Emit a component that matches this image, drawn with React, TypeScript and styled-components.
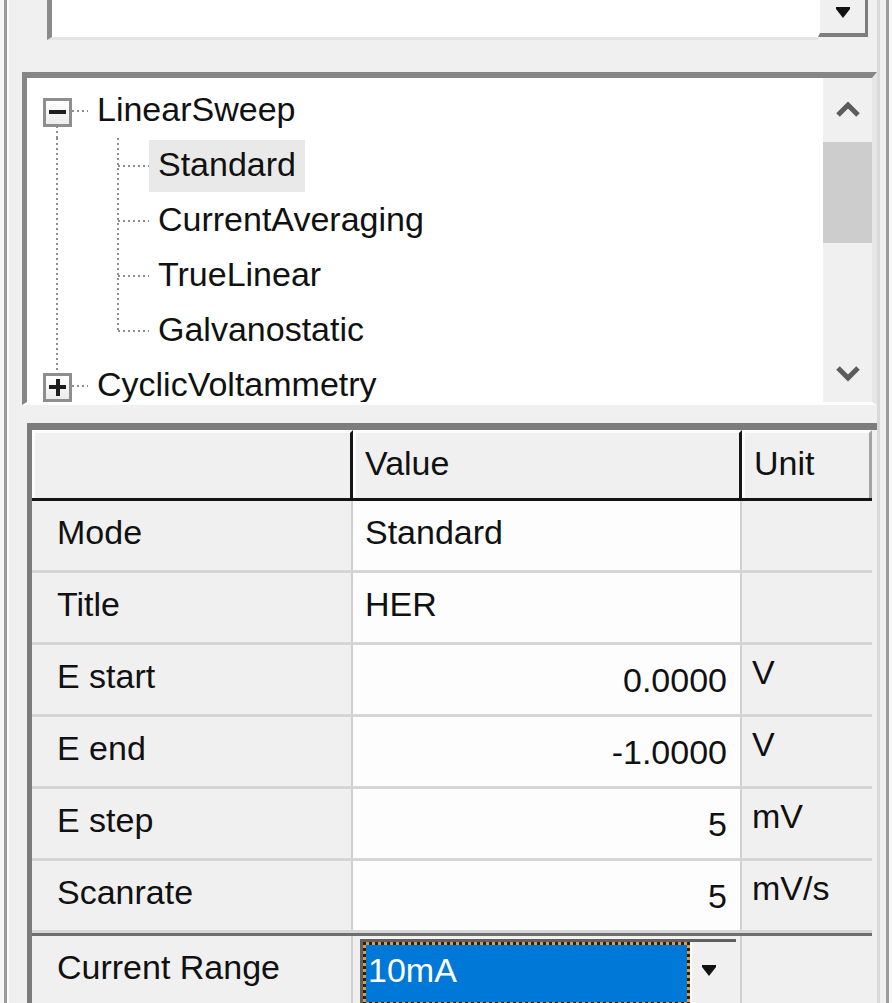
import React from 'react';
import styled, { createGlobalStyle, css } from 'styled-components';

const GlobalStyle = createGlobalStyle`
  html, body { margin: 0; padding: 0; background: #f7f7f7; }
  * { box-sizing: border-box; }
`;

const Page = styled.div`
  width: 892px;
  height: 1003px;
  overflow: hidden;
  background: #f7f7f7;
  padding-left: 4px;
  font-family: "Liberation Sans", Arial, sans-serif;
  font-size: 34px;
  color: #111;
`;

const Frame = styled.div`
  width: 885px;
  height: 1003px;
  border-left: 3px solid #9b9b9b;
  border-right: 3px solid #9b9b9b;
  background: #f0f0f0;
`;

const Inner = styled.div`
  width: 873px;
  height: 100%;
  border-left: 2px solid #fbfbfb;
  border-right: 3px solid #d9d9d9;
  display: flex;
  flex-direction: column;
`;

/* ---------- top combo ---------- */
const ComboRow = styled.div`
  display: flex;
  align-items: flex-start;
  margin: -13px 0 0 38px;
  width: 821px;
  height: 53px;
  flex: none;
`;

const ComboField = styled.div`
  flex: 1;
  height: 53px;
  background: #fff;
  border-left: 5px solid #8a8a8a;
  border-bottom: 3px solid #e4e4e4;
`;

const ComboButton = styled.div`
  width: 50px;
  height: 50px;
  flex: none;
  display: flex;
  align-items: center;
  justify-content: center;
  padding-top: 6px;
  background: #f0f0f0;
  border-left: 2px solid #fdfdfd;
  border-right: 3px solid #7d7d7d;
  border-bottom: 4px solid #7d7d7d;
`;

const DropArrow = () => (
  <svg width="16" height="12" viewBox="0 0 16 12">
    <polygon points="1,0 15,0 15,2 8,11 1,2" fill="#111" />
  </svg>
);

/* ---------- tree ---------- */
const TreePanel = styled.div`
  margin: 32px 0 0 13px;
  width: 855px;
  height: 333px;
  flex: none;
  display: flex;
  border-top: 6px solid #868686;
  border-left: 5px solid #868686;
  border-bottom: 3px solid #fdfdfd;
  border-right: 5px solid #e6e6e6;
`;

const TreeView = styled.div`
  flex: 1;
  background: #fff;
  padding-top: 5px;
  display: flex;
  flex-direction: column;
  overflow: hidden;
`;

const TreeRow = styled.div`
  display: flex;
  height: 55px;
  flex: none;
`;

type LineKind = 'full' | 'top' | 'bottom' | 'none';

const dotV = 'repeating-linear-gradient(to bottom, #8e8e8e 0 2px, transparent 2px 5px)';
const dotH = 'repeating-linear-gradient(to right, #8e8e8e 0 2px, transparent 2px 5px)';

const Gutter = styled.div<{ $line: LineKind; $stubFrom?: number }>`
  flex: none;
  width: 61px;
  display: flex;
  align-items: center;
  background-repeat: no-repeat;
  ${({ $line, $stubFrom }) => {
    const imgs: string[] = [];
    const sizes: string[] = [];
    const pos: string[] = [];
    if ($line !== 'none') {
      imgs.push(dotV);
      sizes.push($line === 'full' ? '2px 100%' : '2px 50%');
      pos.push($line === 'bottom' ? '29px 100%' : '29px 0');
    }
    if ($stubFrom !== undefined) {
      imgs.push(dotH);
      sizes.push(`${61 - $stubFrom}px 2px`);
      pos.push(`${$stubFrom}px 50%`);
    }
    if (!imgs.length) return css``;
    return css`
      background-image: ${imgs.join(', ')};
      background-size: ${sizes.join(', ')};
      background-position: ${pos.join(', ')};
    `;
  }}
`;

const ExpandBox = styled.span<{ $open: boolean }>`
  position: relative;
  margin-left: 16px;
  margin-top: 3px;
  width: 29px;
  height: 29px;
  border: 3px solid #8e8e8e;
  background: linear-gradient(#ffffff, #ececec);
  display: flex;
  align-items: center;
  justify-content: center;
  &::before {
    content: '';
    width: 17px;
    height: 4px;
    background: #1e1e1e;
  }
  ${({ $open }) =>
    !$open &&
    css`
      &::after {
        content: '';
        position: absolute;
        width: 4px;
        height: 17px;
        background: #1e1e1e;
      }
    `}
`;

const NodeLabel = styled.span<{ $selected?: boolean }>`
  align-self: center;
  display: flex;
  align-items: center;
  height: 52px;
  padding: 0 9px 3px;
  white-space: nowrap;
  line-height: 1;
  color: #111;
  background: ${({ $selected }) => ($selected ? '#e9e9e9' : 'transparent')};
`;

const Scrollbar = styled.div`
  width: 49px;
  flex: none;
  display: flex;
  flex-direction: column;
  background: #f0f0f0;
`;

const ScrollArrow = styled.div<{ $h: number }>`
  height: ${({ $h }) => $h}px;
  flex: none;
  display: flex;
  align-items: center;
  justify-content: center;
`;

const Thumb = styled.div`
  height: 101px;
  flex: none;
  background: #cdcdcd;
`;

const Track = styled.div`
  flex: 1;
`;

const Chevron = ({ down }: { down?: boolean }) => (
  <svg width="26" height="18" viewBox="0 0 26 18">
    <polyline
      points={down ? '3,4 13,14 23,4' : '3,14 13,4 23,14'}
      fill="none"
      stroke="#5c5c5c"
      strokeWidth="5"
    />
  </svg>
);

/* ---------- table ---------- */
const Table = styled.div`
  margin: 18px 0 0 18px;
  width: 850px;
  flex: 1;
  border-top: 7px solid #7c7c7c;
  border-left: 5px solid #7c7c7c;
`;

const COLS = '321px 389px 130px';

const HeaderRow = styled.div`
  display: grid;
  grid-template-columns: ${COLS};
  height: 71px;
  width: 840px;
  border-bottom: 3px solid #141414;
`;

const HeaderCell = styled.div<{ $edge: 'dark' | 'light' }>`
  display: flex;
  align-items: center;
  padding: 0 0 4px 9px;
  background: #f0f0f0;
  border-top: 3px solid #fcfcfc;
  border-left: 3px solid #fcfcfc;
  border-right: 3px solid ${({ $edge }) => ($edge === 'dark' ? '#161616' : '#a3a3a3')};
`;

const BodyRow = styled.div<{ $active?: boolean }>`
  display: grid;
  grid-template-columns: ${COLS};
  width: 840px;
  height: 72px;
  border-bottom: 3px solid #d6d6d6;
  ${({ $active }) =>
    $active &&
    css`
      border-bottom: none;
      border-top: 3px solid #6e6e6e;
    `}
`;

const NameCell = styled.div`
  display: flex;
  align-items: center;
  padding: 0 0 6px 25px;
  background: #f0f0f0;
  border-right: 2px solid #d0d0d0;
  white-space: nowrap;
`;

const ValueCell = styled.div<{ $align: 'left' | 'right' }>`
  display: flex;
  align-items: center;
  justify-content: ${({ $align }) => ($align === 'right' ? 'flex-end' : 'flex-start')};
  padding: ${({ $align }) => ($align === 'right' ? '2px 13px 0 0' : '0 0 6px 12px')};
  background: #fdfdfd;
  border-right: 2px solid #d0d0d0;
  white-space: nowrap;
`;

const UnitCell = styled.div`
  display: flex;
  align-items: center;
  padding: 0 0 14px 10px;
  background: #f0f0f0;
  white-space: nowrap;
`;

const EditCell = styled.div`
  display: flex;
  padding: 3px 4px 0 7px;
  background: #f0f0f0;
  border-right: 2px solid #d0d0d0;
`;

const EditCombo = styled.div`
  flex: 1;
  display: flex;
  border-top: 3px solid #5f5f5f;
  border-left: 3px solid #5f5f5f;
`;

const SelectedField = styled.div`
  flex: 1;
  display: flex;
  align-items: center;
  padding: 0 0 6px 2px;
  color: #fff;
  border: 3px dotted #2a2010;
  background: linear-gradient(#0078d7, #0078d7) padding-box, #d99a4a border-box;
`;

const EditButton = styled.div`
  width: 46px;
  flex: none;
  display: flex;
  align-items: center;
  justify-content: center;
  padding: 0 10px 6px 0;
  background: #f0f0f0;
  border-left: 2px solid #fdfdfd;
`;

type Param = { name: string; value: string; unit: string; align: 'left' | 'right' };

const params: Param[] = [
  { name: 'Mode', value: 'Standard', unit: '', align: 'left' },
  { name: 'Title', value: 'HER', unit: '', align: 'left' },
  { name: 'E start', value: '0.0000', unit: 'V', align: 'right' },
  { name: 'E end', value: '-1.0000', unit: 'V', align: 'right' },
  { name: 'E step', value: '5', unit: 'mV', align: 'right' },
  { name: 'Scanrate', value: '5', unit: 'mV/s', align: 'right' },
];

const children = ['Standard', 'CurrentAveraging', 'TrueLinear', 'Galvanostatic'];

export default function App() {
  return (
    <Page>
      <GlobalStyle />
      <Frame>
        <Inner>
          <ComboRow>
            <ComboField />
            <ComboButton>
              <DropArrow />
            </ComboButton>
          </ComboRow>

          <TreePanel>
            <TreeView>
              <TreeRow>
                <Gutter $line="bottom" $stubFrom={45}>
                  <ExpandBox $open />
                </Gutter>
                <NodeLabel>LinearSweep</NodeLabel>
              </TreeRow>
              {children.map((c, i) => (
                <TreeRow key={c}>
                  <Gutter $line="full" />
                  <Gutter $line={i === children.length - 1 ? 'top' : 'full'} $stubFrom={30} />
                  <NodeLabel $selected={i === 0}>{c}</NodeLabel>
                </TreeRow>
              ))}
              <TreeRow>
                <Gutter $line="top" $stubFrom={45}>
                  <ExpandBox $open={false} />
                </Gutter>
                <NodeLabel>CyclicVoltammetry</NodeLabel>
              </TreeRow>
            </TreeView>
            <Scrollbar>
              <ScrollArrow $h={64}>
                <Chevron />
              </ScrollArrow>
              <Thumb />
              <Track />
              <ScrollArrow $h={59}>
                <Chevron down />
              </ScrollArrow>
            </Scrollbar>
          </TreePanel>

          <Table>
            <HeaderRow>
              <HeaderCell $edge="dark" />
              <HeaderCell $edge="dark">Value</HeaderCell>
              <HeaderCell $edge="light">Unit</HeaderCell>
            </HeaderRow>
            {params.map((p) => (
              <BodyRow key={p.name}>
                <NameCell>{p.name}</NameCell>
                <ValueCell $align={p.align}>{p.value}</ValueCell>
                <UnitCell>{p.unit}</UnitCell>
              </BodyRow>
            ))}
            <BodyRow $active>
              <NameCell>Current Range</NameCell>
              <EditCell>
                <EditCombo>
                  <SelectedField>10mA</SelectedField>
                  <EditButton>
                    <DropArrow />
                  </EditButton>
                </EditCombo>
              </EditCell>
              <UnitCell />
            </BodyRow>
          </Table>
        </Inner>
      </Frame>
    </Page>
  );
}
